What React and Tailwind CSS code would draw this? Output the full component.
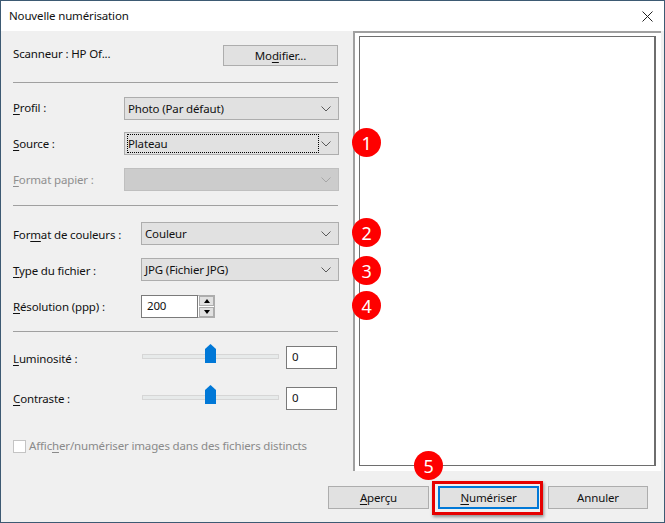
import React from "react";

const Chevron = ({ color = "#5a5a5a" }) => (
  <svg width="10" height="6" viewBox="0 0 10 6" fill="none" className="shrink-0">
    <path d="M0.5 0.5L5 5L9.5 0.5" stroke={color} strokeWidth="1" />
  </svg>
);

const Select = ({ value, focused, disabled, className }) => (
  <div
    className={`h-[23px] flex items-center justify-between border pr-[7px] ${
      disabled ? "bg-[#cccccc] border-[#bfbfbf]" : "bg-[#e1e1e1] border-[#adadad]"
    } ${className}`}
  >
    {focused ? (
      <span className="ml-[2px] h-[19px] w-[192px] flex items-center border border-dotted border-black">
        {value}
      </span>
    ) : (
      <span className="pl-[3px]">{value}</span>
    )}
    <Chevron color={disabled ? "#a6a6a6" : "#5a5a5a"} />
  </div>
);

const Label = ({ before = "", mark, after, className = "" }) => (
  <span className={className}>
    {before}
    <span className="underline underline-offset-2">{mark}</span>
    {after}
  </span>
);

const Separator = ({ className }) => <div className={`h-px bg-[#a0a0a0] ${className}`} />;

const Slider = ({ className }) => (
  <div className={`relative flex h-[23px] items-center ${className}`}>
    <div className="ml-[129px] mb-[3px] h-[5px] w-[137px] border border-[#d6d6d6] bg-[#e7eaea]" />
    <svg
      width="11"
      height="19"
      viewBox="0 0 11 19"
      className="absolute left-[192px] top-[-2px]"
    >
      <path d="M5.5 0L11 5V19H0V5Z" fill="#0078d7" />
    </svg>
    <div className="ml-[7px] h-[23px] w-[51px] border border-[#7a7a7a] bg-white pl-[5px] leading-[19px]">
      0
    </div>
  </div>
);

const Button = ({ children, className = "" }) => (
  <div
    className={`h-[23px] w-[101px] flex items-center justify-center border border-[#adadad] bg-[#e1e1e1] ${className}`}
  >
    {children}
  </div>
);

const Badge = ({ n, className }) => (
  <div
    className={`absolute h-[29px] w-[29px] rounded-full bg-[#fe0000] flex items-center justify-center text-white text-[18px] ${className}`}
  >
    {n}
  </div>
);

export default function App() {
  return (
    <div className="relative flex h-[523px] w-[665px] flex-col overflow-hidden border border-[#3d5a73] font-['Noto_Sans',sans-serif] text-[11.5px] tracking-[-0.15px] text-[#111111] leading-[16px]">
      <div className="h-[30px] shrink-0 bg-white flex items-center justify-between pl-2 pr-[11px]">
        <span>Nouvelle numérisation</span>
        <svg width="11" height="11" viewBox="0 0 11 11" fill="none">
          <path d="M0.5 0.5L10.5 10.5M10.5 0.5L0.5 10.5" stroke="#222" strokeWidth="1" />
        </svg>
      </div>

      <div className="flex flex-1 flex-col bg-[#f0f0f0]">
        <div className="flex h-[440px]">
          {/* left settings column */}
          <div className="w-[352px] shrink-0 pl-3">
            <div className="mt-[14px] flex h-[21px] w-[325px] items-center justify-between">
              <span className="mb-[3px]">Scanneur : HP Of...</span>
              <Button className="!w-[115px] !h-[21px]">
                <Label before="Mo" mark="d" after="ifier..." />
              </Button>
            </div>
            <Separator className="mt-[16px] w-[325px]" />

            <div className="mt-[14px] flex h-[23px] w-[326px] items-center justify-between">
              <Label mark="P" after="rofil :" className="mb-[2px]" />
              <Select value="Photo (Par défaut)" className="w-[215px]" />
            </div>
            <div className="mt-[12px] flex h-[23px] w-[326px] items-center justify-between">
              <Label mark="S" after="ource :" />
              <Select value="Plateau" focused className="w-[215px]" />
            </div>
            <div className="mt-[13px] flex h-[23px] w-[326px] items-center justify-between text-[#8f8f8f]">
              <Label mark="F" after="ormat papier :" />
              <Select disabled value="" className="w-[215px]" />
            </div>
            <Separator className="mt-[14px] w-[325px]" />

            <div className="mt-[16px] flex h-[23px] w-[326px] items-center justify-between">
              <Label before="For" mark="m" after="at de couleurs :" className="mt-[3px]" />
              <Select value="Couleur" className="w-[198px]" />
            </div>
            <div className="mt-[13px] flex h-[23px] w-[326px] items-center justify-between">
              <Label mark="T" after="ype du fichier :" className="mt-[3px]" />
              <Select value="JPG (Fichier JPG)" className="w-[198px]" />
            </div>
            <div className="mt-[14px] flex h-[23px] w-[326px] items-center">
              <Label mark="R" after="ésolution (ppp) :" className="w-[128px]" />
              <div className="flex h-[23px] w-[74px]">
                <div className="h-full w-[57px] border border-[#7a7a7a] bg-white pl-[5px] leading-[19px]">
                  200
                </div>
                <div className="flex h-full w-[17px] flex-col gap-px border border-[#adadad] border-l-0 bg-white pl-px">
                  <div className="flex h-[10px] flex-1 items-center justify-center bg-[#e1e1e1] border border-[#adadad]">
                    <div className="h-0 w-0 border-x-[3.5px] border-b-[4px] border-x-transparent border-b-black" />
                  </div>
                  <div className="flex h-[10px] flex-1 items-center justify-center bg-[#e1e1e1] border border-[#adadad]">
                    <div className="h-0 w-0 border-x-[3.5px] border-t-[4px] border-x-transparent border-t-black" />
                  </div>
                </div>
              </div>
            </div>
            <Separator className="mt-[13px] w-[325px]" />

            <div className="mt-[14px] flex h-[23px] w-[325px] items-center">
              <Label mark="L" after="uminosité :" className="mt-[3px]" />
            </div>
            <Slider className="mt-[-23px] w-[325px]" />
            <div className="mt-[18px] flex h-[23px] w-[325px] items-center">
              <Label mark="C" after="ontraste :" className="mt-[1px]" />
            </div>
            <Slider className="mt-[-23px] w-[325px]" />

            <div className="mt-[28px] flex items-center gap-[3px] text-[#8a8a8a]">
              <div className="h-[13px] w-[13px] border border-[#c4c4c4] bg-white" />
              <Label before="Affic" mark="h" after="er/numériser images dans des fichiers distincts" />
            </div>
          </div>

          {/* preview pane */}
          <div className="flex h-[440px] w-[308px] border-2 border-[#a0a0a0] border-r-0 border-b-0 bg-white pt-[3px] pl-[4px] pr-[5px] pb-[5px]">
            <div className="h-full w-full border border-[#6e6e6e] border-r-2 bg-white" />
          </div>
        </div>

        <div className="mt-[15px] flex justify-end gap-[9px] pr-[16px]">
          <Button>
            <Label mark="A" after="perçu" />
          </Button>
          <div className="relative">
            <Button className="!border-2 !border-[#0078d7]">
              <Label mark="N" after="umériser" />
            </Button>
            <div className="absolute -left-[6px] -right-[4px] -top-[5px] -bottom-[6px] border-[3px] border-[#e60000] shadow-[1px_2px_3px_rgba(0,0,0,0.4)]" />
          </div>
          <Button className="!w-[100px]">Annuler</Button>
        </div>
      </div>

      <Badge n="1" className="left-[351px] top-[127px]" />
      <Badge n="2" className="left-[351px] top-[217px]" />
      <Badge n="3" className="left-[351px] top-[255px]" />
      <Badge n="4" className="left-[351px] top-[290px]" />
      <Badge n="5" className="left-[413px] top-[450px]" />
    </div>
  );
}
